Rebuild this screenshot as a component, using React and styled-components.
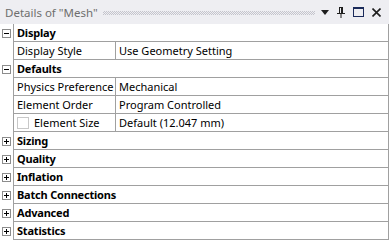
import React from 'react'
import styled, { createGlobalStyle } from 'styled-components'

const GlobalStyle = createGlobalStyle`
  html, body {
    margin: 0;
    padding: 0;
    background: #ffffff;
  }
  body {
    font-family: "Noto Sans", "Open Sans", Arial, sans-serif;
    font-size: 11px;
  }
`

const Panel = styled.div`
  width: 389px;
  height: 244px;
  display: flex;
  flex-direction: column;
  background: #ffffff;
`

const TitleBar = styled.div`
  height: 24px;
  display: flex;
  align-items: center;
  padding: 0 8px 0 5px;
  background: #eeeef2;
  box-sizing: border-box;
`

const Title = styled.span`
  color: #6e6e6e;
  font-size: 11.5px;
  white-space: nowrap;
`

const Grip = styled.div`
  flex: 1;
  height: 4px;
  margin: 1px 6px 0 5px;
  background: repeating-conic-gradient(#c4c4cc 0 25%, transparent 0 50%) 0 0 / 2px 2px;
`

const TitleButtons = styled.div`
  display: flex;
  align-items: center;
  gap: 8px;
`

const Body = styled.div`
  display: grid;
  grid-template-columns: 13px 1fr;
`

const Gutter = styled.div`
  display: flex;
  align-items: center;
  justify-content: center;
  height: 18px;
  padding-right: 1px;
  box-sizing: border-box;
`

const Expander = styled.span`
  width: 9px;
  height: 9px;
  box-sizing: border-box;
  border: 1px solid #8c8c8c;
  position: relative;
  background: #ffffff;
  &::before {
    content: '';
    position: absolute;
    left: 1px;
    top: 3px;
    width: 5px;
    height: 1px;
    background: #000;
  }
  &::after {
    content: '';
    display: ${({ open }) => (open ? 'none' : 'block')};
    position: absolute;
    left: 3px;
    top: 1px;
    width: 1px;
    height: 5px;
    background: #000;
  }
`

const Row = styled.div`
  display: grid;
  grid-template-columns: ${({ header }) => (header ? '1fr' : '101px 1fr')};
  height: 18px;
  border-left: 1px solid #a0a0a0;
  border-right: 1px solid #a0a0a0;
  border-bottom: 1px solid #a0a0a0;
  box-sizing: border-box;
`

const Cell = styled.div`
  display: flex;
  align-items: center;
  gap: 5px;
  padding-left: 3px;
  font-weight: ${({ bold }) => (bold ? 700 : 400)};
  letter-spacing: ${({ bold }) => (bold ? '-0.2px' : '0')};
  color: #000000;
  white-space: nowrap;
  overflow: hidden;
  & + & {
    border-left: 1px solid #a0a0a0;
  }
`

const Check = styled.span`
  width: 12px;
  height: 12px;
  box-sizing: border-box;
  border: 1px solid #c8c8c8;
  background: #ffffff;
`

const sections = [
  { title: 'Display', open: true, rows: [['Display Style', 'Use Geometry Setting']] },
  {
    title: 'Defaults',
    open: true,
    rows: [
      ['Physics Preference', 'Mechanical'],
      ['Element Order', 'Program Controlled'],
      ['Element Size', 'Default (12.047 mm)', true],
    ],
  },
  { title: 'Sizing' },
  { title: 'Quality' },
  { title: 'Inflation' },
  { title: 'Batch Connections' },
  { title: 'Advanced' },
  { title: 'Statistics' },
]

function TitleIcons() {
  return (
    <TitleButtons>
      <svg width="8" height="5" viewBox="0 0 8 5">
        <path d="M0 0H8L4 5Z" fill="#1e1e1e" />
      </svg>
      <svg width="8" height="11" viewBox="0 0 8 11">
        <path d="M2 0.5H6M2.5 0.5V6.5M5.5 0.5V6.5M0 6.5H8M4 6.5V11" stroke="#1e1e1e" strokeWidth="1" fill="none" />
        <rect x="4" y="0.5" width="1.5" height="6" fill="#1e1e1e" />
      </svg>
      <svg width="11" height="10" viewBox="0 0 11 10">
        <rect x="0.5" y="0.5" width="10" height="9" fill="none" stroke="#1a2a5a" strokeWidth="1" />
        <rect x="0.5" y="0.5" width="10" height="1.5" fill="#1a2a5a" />
      </svg>
      <svg width="9" height="9" viewBox="0 0 9 9">
        <path d="M0.5 0.5L8.5 8.5M8.5 0.5L0.5 8.5" stroke="#1e1e1e" strokeWidth="1.6" />
      </svg>
    </TitleButtons>
  )
}

export default function App() {
  return (
    <Panel>
      <GlobalStyle />
      <TitleBar>
        <Title>Details of "Mesh"</Title>
        <Grip />
        <TitleIcons />
      </TitleBar>
      <Body>
        {sections.map(section => (
          <React.Fragment key={section.title}>
            <Gutter>
              <Expander open={section.open} />
            </Gutter>
            <Row header>
              <Cell bold>{section.title}</Cell>
            </Row>
            {(section.rows || []).map(([label, value, check]) => (
              <React.Fragment key={label}>
                <Gutter />
                <Row>
                  <Cell>
                    {check && <Check />}
                    {label}
                  </Cell>
                  <Cell>{value}</Cell>
                </Row>
              </React.Fragment>
            ))}
          </React.Fragment>
        ))}
      </Body>
    </Panel>
  )
}
